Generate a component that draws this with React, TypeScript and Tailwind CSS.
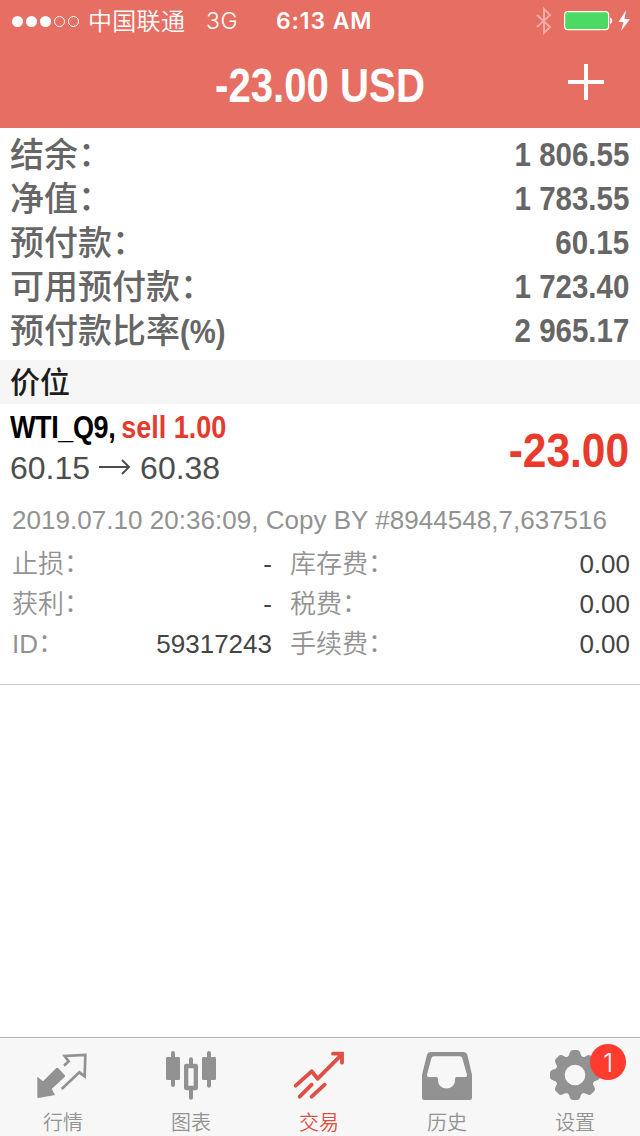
import type { ReactNode } from 'react';

const summary = [
  { label: '结余', value: '1 806.55' },
  { label: '净值', value: '1 783.55' },
  { label: '预付款', value: '60.15' },
  { label: '可用预付款', value: '1 723.40' },
  { label: '预付款比率', suffix: '(%)', value: '2 965.17' },
];

const details = [
  { left: '止损', leftValue: '-', right: '库存费', rightValue: '0.00' },
  { left: '获利', leftValue: '-', right: '税费', rightValue: '0.00' },
  { left: 'ID', leftValue: '59317243', right: '手续费', rightValue: '0.00' },
];

// the full-width colon sits a little higher than the font puts it
function Colon() {
  return <span className="inline-block -translate-y-px">：</span>;
}

function StatusBar() {
  return (
    <div className="flex h-10 items-center pl-3 pr-2 pt-0.5 text-2xl leading-10 text-white">
      <div className="flex gap-[3px]">
        {[0, 1, 2].map((i) => (
          <span key={i} className="size-[11px] rounded-full bg-white" />
        ))}
        {[3, 4].map((i) => (
          <span key={i} className="size-[11px] rounded-full border border-white" />
        ))}
      </div>
      <span className="ml-[9px] w-[118px] pt-px font-[350] tracking-[0.3px]">中国联通</span>
      <span className="w-[70px] font-['Inter'] text-[23px] font-light tracking-[0.5px]">3G</span>
      <span className="font-['Inter'] text-[23px] font-semibold tracking-[0.9px]">6:13 AM</span>
      <svg className="ml-auto" width="16" height="28" viewBox="0 0 16 28" fill="none" stroke="#f3aca5" strokeWidth="2">
        <path d="M1 8l13 12-6 6V2l6 6L1 20" />
      </svg>
      <svg className="ml-3" width="68" height="24" viewBox="0 0 68 24">
        <rect x="0.6" y="2.6" width="44" height="18" rx="3" fill="#4cd964" stroke="#fff" strokeWidth="1.2" />
        <path d="M46 8.500c3 .5 3 6 0 6.500z" fill="#fff" />
        <path d="M62 1L54.500 13h5L57 22l9-12h-5.500z" fill="#fff" />
      </svg>
    </div>
  );
}

function QuotesIcon() {
  return (
    <>
      <path d="M7 86l17 14 40-40q3-2 6 1l19 20q3 3 0 6l-39 36 10 18-50 9q-3 0-3-4z" fill="currentColor" />
      <path d="M87 53l14-13-12-16 62-3-2 64-16-12-53 50" fill="none" stroke="currentColor" strokeWidth="8" />
    </>
  );
}

function ChartIcon() {
  return (
    <>
      <path d="M30 15v96M138 15v98M84 34v20M84 125v24" stroke="currentColor" strokeWidth="12" strokeLinecap="round" />
      <rect x="9" y="27" width="42" height="69" rx="4" fill="currentColor" />
      <rect x="117" y="27" width="42" height="69" rx="4" fill="currentColor" />
      <rect x="69.5" y="54" width="29" height="66" fill="none" stroke="currentColor" strokeWidth="13" strokeLinejoin="round" />
    </>
  );
}

function TradeIcon() {
  return (
    <g fill="none" stroke="currentColor" strokeWidth="11.5" strokeLinecap="round">
      <path d="M14 113l48-43 18 22 69-69M26 146l36-36M62 146l39-36" strokeLinejoin="round" />
      <path d="M126 17h27v27M143 17l10 12" />
    </g>
  );
}

function HistoryIcon() {
  return (
    <path
      d="M34 12h100q8 0 11 8l14 60v69q0 7-7 7H16q-7 0-7-7V80l15-60q2-8 10-8zM45 25q-6 0-8 6L24 80q-1 7 5 7h23q5 0 5 6v3c0 34 51 34 51 0v-3q0-6 5-6h26q6 0 5-7l-14-49q-2-6-8-6z"
      fill="currentColor"
      fillRule="evenodd"
    />
  );
}

function GearIcon() {
  return (
    <>
      {[0, 45, 90, 135, 180, 225, 270, 315].map((angle) => (
        <path
          key={angle}
          d="M54 32q12-6 13-14 3-12 11-12h12q8 0 11 12 1 8 13 14z"
          fill="currentColor"
          transform={`rotate(${angle} 84 81)`}
        />
      ))}
      <circle cx="84" cy="81" r="45" fill="none" stroke="currentColor" strokeWidth="28" />
    </>
  );
}

const tabs: { label: string; icon: ReactNode; active?: boolean; badge?: number }[] = [
  { label: '行情', icon: <QuotesIcon /> },
  { label: '图表', icon: <ChartIcon /> },
  { label: '交易', icon: <TradeIcon />, active: true },
  { label: '历史', icon: <HistoryIcon /> },
  { label: '设置', icon: <GearIcon />, badge: 1 },
];

function TabBar() {
  return (
    <nav className="mt-auto grid h-[99px] grid-cols-5 border-t border-[#b2b2b2] bg-[#f7f7f7]">
      {tabs.map((tab) => (
        <div
          key={tab.label}
          className={`relative flex flex-col items-center pr-0.5 pt-2.5 ${tab.active ? 'text-[#df4f46]' : 'text-[#929292]'}`}
        >
          <svg width="56" height="56" viewBox="0 0 168 168">
            {tab.icon}
          </svg>
          <span className="mt-[5px] text-xl leading-[28px] font-[350]">{tab.label}</span>
          {tab.badge && (
            <span className="absolute right-[14px] top-1.5 flex size-9 items-center justify-center rounded-full bg-[#ff3b30] font-['Inter'] text-[26px] font-light text-white">
              {tab.badge}
            </span>
          )}
        </div>
      ))}
    </nav>
  );
}

export default function App() {
  return (
    <div className="flex h-[1136px] w-[640px] flex-col bg-white font-['Liberation_Sans','Noto_Sans_CJK_SC',sans-serif]">
      <header className="h-32 bg-[#e66e62] text-white">
        <StatusBar />
        <div className="grid h-[88px] grid-cols-[1fr_auto_1fr] items-center">
          <h1 className="col-start-2 w-[210px] pt-1 text-[48px] leading-[84px] font-bold whitespace-nowrap">
            <span className="inline-block origin-left scale-x-[0.837]">-23.00 USD</span>
          </h1>
          <svg className="mb-1 mr-9 justify-self-end" width="36" height="36" viewBox="0 0 36 36" stroke="#fff" strokeWidth="4">
            <path d="M18 0v36M0 18h36" />
          </svg>
        </div>
      </header>

      <section className="h-[232px] pt-1 pl-2.5 pr-[11px] text-[34px] leading-[44px] text-[#666]">
        {summary.map((row) => (
          <div key={row.label} className="flex h-11 justify-between">
            <span className="pt-px font-medium">
              {row.label}
              {row.suffix ? (
                <span className="inline-block origin-left scale-x-[0.86] font-bold">{row.suffix}</span>
              ) : (
                <Colon />
              )}
            </span>
            <span className="origin-right scale-x-[0.867] font-bold">{row.value}</span>
          </div>
        ))}
      </section>

      <h2 className="h-11 bg-[#f6f6f6] pl-2.5 pt-px text-[30px] leading-[44px] font-medium text-[#1c1c1c]">价位</h2>

      <section className="h-[281px] border-b border-[#c8c8c8]">
        <div className="flex h-[86px] items-center justify-between pl-2.5 pr-[11px]">
          <div className="pt-0.5">
            <div className="h-10 w-[218px] text-[32px] leading-[40px] font-bold whitespace-nowrap">
              <span className="inline-block origin-left scale-x-[0.845] text-black">
                <span className="tracking-[-0.5px]">WTI_Q9,</span>
                <span className="ml-[7px] text-[#e33b2e]">sell 1.00</span>
              </span>
            </div>
            <div className="flex h-[42px] items-center text-[32px] text-[#4d4d4d]">
              <span>60.15</span>
              <svg className="mx-[9px]" width="32" height="18" viewBox="0 0 32 18" fill="none" stroke="currentColor" strokeWidth="2">
                <path d="M0 8h30M23 1l7 7-7 7" />
              </svg>
              <span>60.38</span>
            </div>
          </div>
          <span className="mt-2 origin-right scale-x-[0.885] text-[48px] font-bold text-[#e93a2c]">-23.00</span>
        </div>
        <p className="mt-2 h-[46px] pl-3 text-[26px] leading-[44px] tracking-[0.03px] whitespace-nowrap text-[#929292]">
          2019.07.10 20:36:09, Copy BY #8944548,7,637516
        </p>
        <div className="text-[26px] leading-[40px]">
          {details.map((row) => (
            <div key={row.left} className="flex h-10 pl-3 pr-2.5 text-[#444]">
              <span className="font-[350] text-[#929292]">
                {row.left}
                <Colon />
              </span>
              <span className="ml-auto">{row.leftValue}</span>
              <div className="ml-[18px] flex w-[340px] justify-between">
                <span className="font-[350] text-[#929292]">
                  {row.right}
                  <Colon />
                </span>
                <span>{row.rightValue}</span>
              </div>
            </div>
          ))}
        </div>
      </section>

      <TabBar />
    </div>
  );
}
